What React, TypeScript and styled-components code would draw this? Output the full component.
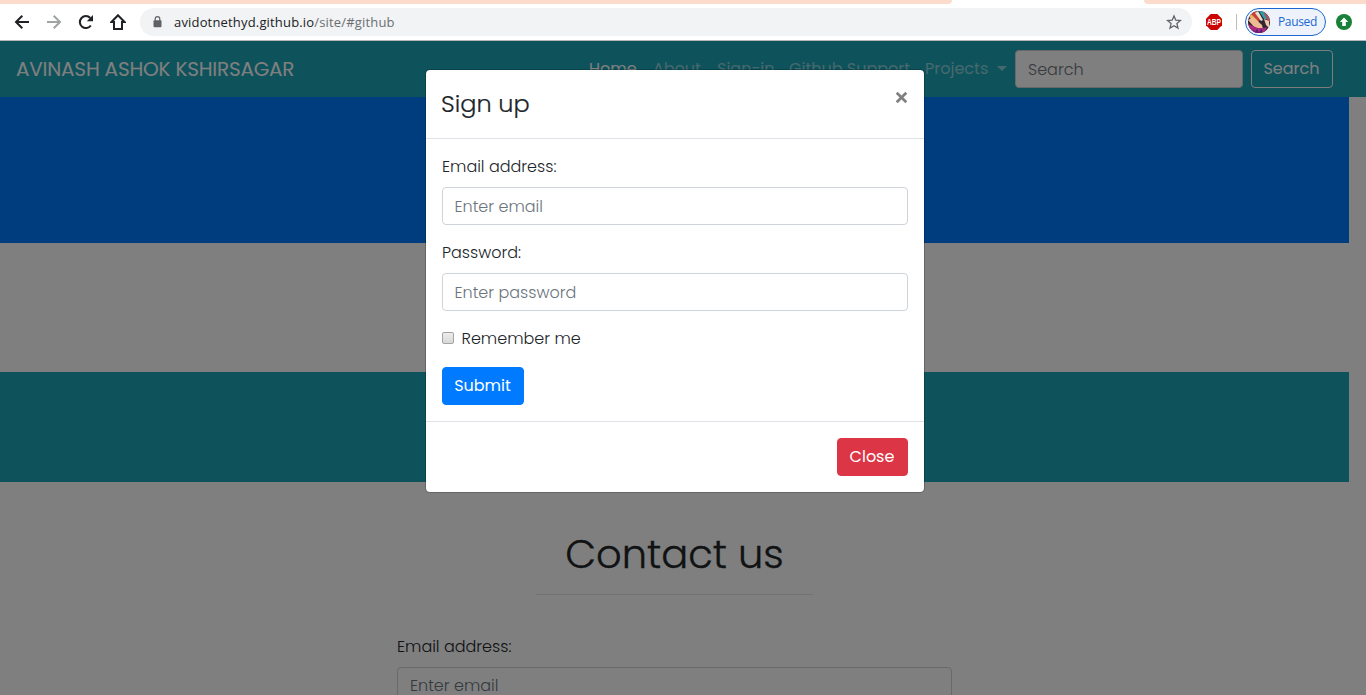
import React from "react";
import styled, { createGlobalStyle } from "styled-components";

const GlobalStyle = createGlobalStyle`
  *, *::before, *::after { box-sizing: border-box; }
  html, body { margin: 0; height: 695px; overflow: hidden; background: #fff; }
  body {
    font-family: Poppins, Inter, "Open Sans", sans-serif;
    font-size: 16px;
    font-weight: 300;
    line-height: 1.5;
    color: #212529;
  }
`;

const Window = styled.div`
  height: 695px;
  display: flex;
  flex-direction: column;
  overflow: hidden;
`;

const TabStrip = styled.div`
  flex: none;
  height: 4px;
  display: flex;
  justify-content: space-between;
  overflow: hidden;
`;

const TabEdge = styled.div<{ $width: number; $side: "left" | "right" }>`
  width: ${(p) => p.$width}px;
  height: 4px;
  background: #fddbca;
  border-radius: ${(p) => (p.$side === "left" ? "0 0 7px 0" : "0 0 0 7px")};
`;

const Toolbar = styled.div`
  flex: none;
  height: 37px;
  display: flex;
  align-items: center;
  padding: 0 14px;
  border-bottom: 1px solid #b5b5b5;
  background: #fff;
`;

const NavIcons = styled.div`
  display: flex;
  gap: 16px;
  margin-right: 14px;
  svg { display: block; }
`;

const AddressBar = styled.div`
  width: 1052px;
  height: 28px;
  display: flex;
  align-items: center;
  padding: 0 10px 0 12px;
  border-radius: 14px;
  background: #f1f3f4;
  svg { display: block; flex: none; }
`;

const Url = styled.div`
  flex: 1;
  margin-left: 11px;
  font: 400 13px/20px "Open Sans", sans-serif;
  letter-spacing: 0.17px;
  color: #6b6f73;
  span { color: #202124; }
`;

const ToolbarEnd = styled.div`
  display: flex;
  align-items: center;
  margin-left: 14px;
  svg { display: block; flex: none; overflow: visible; }
`;

const Separator = styled.div`
  width: 1px;
  height: 16px;
  margin: 0 8px 0 14px;
  background: #b9bcc0;
`;

const Profile = styled.div`
  width: 81px;
  height: 28px;
  display: flex;
  align-items: center;
  gap: 8px;
  padding-left: 2px;
  margin-right: 10px;
  border: 1px solid #1a66d2;
  border-radius: 14px;
  background: #edf2fb;
  font: 400 12px/18px "Open Sans", sans-serif;
  letter-spacing: -0.35px;
  color: #1967d2;
`;

const Viewport = styled.main`
  position: relative;
  flex: 1;
  overflow: hidden;
`;

const Navbar = styled.nav`
  height: 56px;
  display: flex;
  align-items: center;
  padding: 0 33px 0 16px;
  background: #1ca5b8;
`;

const Brand = styled.div`
  flex: 1;
  font-size: 20px;
  line-height: 30px;
  font-weight: 400;
  letter-spacing: -0.22px;
  color: #fff;
`;

const NavLink = styled.div<{ $width: number; $active?: boolean }>`
  width: ${(p) => p.$width}px;
  padding-left: 8px;
  font-weight: 400;
  white-space: nowrap;
  color: ${(p) => (p.$active ? "#fff" : "rgba(255,255,255,.5)")};
`;

const Caret = styled.span`
  display: inline-block;
  margin-left: 9px;
  vertical-align: 3px;
  border: 5px solid transparent;
  border-top-color: currentColor;
  border-bottom: 0;
`;

const SearchForm = styled.div`
  display: flex;
  gap: 8px;
`;

const Field = styled.div<{ $width?: number }>`
  width: ${(p) => (p.$width ? `${p.$width}px` : "100%")};
  height: 38px;
  padding: 7px 12px 5px 11.5px;
  border: 1px solid #ced4da;
  border-radius: 4px;
  background: #fff;
  color: #6c757d;
`;

const SearchField = styled(Field)`
  padding-left: 12px;
`;

const ContactField = styled(Field)`
  padding: 6px 12px;
`;

const Button = styled.button<{ $tone: "primary" | "danger" | "outline"; $width: number }>`
  display: block;
  width: ${(p) => p.$width}px;
  height: 38px;
  padding: 0 1px 0 0;
  border: 1px solid ${(p) => ({ primary: "#007bff", danger: "#dc3545", outline: "#f8f9fa" })[p.$tone]};
  border-radius: 4px;
  background: ${(p) => ({ primary: "#007bff", danger: "#dc3545", outline: "transparent" })[p.$tone]};
  color: #fff;
  font: inherit;
  font-weight: 400;
`;

const Band = styled.div<{ $height: number; $color: string }>`
  width: 1349px;
  height: ${(p) => p.$height}px;
  background: ${(p) => p.$color};
`;

const Contact = styled.section`
  width: 1349px;
  display: flex;
  flex-direction: column;
  align-items: center;
  padding-top: 43px;
`;

const ContactTitle = styled.h1`
  margin: 0;
  width: 277px;
  height: 70px;
  border-bottom: 1px solid rgba(0, 0, 0, 0.1);
  text-align: center;
  font-size: 40px;
  line-height: 58px;
  font-weight: 300;
  white-space: nowrap;
  -webkit-text-stroke: 0.35px currentColor;
`;

const ContactForm = styled.div`
  width: 555px;
  padding-top: 40px;
`;

const Label = styled.div`
  margin-bottom: 8px;
`;

const Backdrop = styled.div`
  position: absolute;
  inset: 0;
  display: flex;
  justify-content: center;
  align-items: flex-start;
  padding: 28px 16px 0 0;
  background: rgba(0, 0, 0, 0.5);
`;

const Dialog = styled.div`
  width: 500px;
  height: 424px;
  border: 1px solid rgba(0, 0, 0, 0.2);
  border-radius: 5px;
  background: #fff;
  background-clip: padding-box;
`;

const DialogHeader = styled.header`
  height: 69px;
  display: flex;
  justify-content: space-between;
  padding: 16px 16px 16px 15px;
  border-bottom: 1px solid #dee2e6;
  svg { margin: 5px 0 0; }
`;

const DialogTitle = styled.h4`
  margin: 0;
  font-size: 24px;
  line-height: 36px;
  font-weight: 300;
  -webkit-text-stroke: 0.2px currentColor;
`;

const DialogBody = styled.div`
  height: 282px;
  padding: 16px;
`;

const FormGroup = styled.div`
  margin-bottom: 16px;
`;

const CheckRow = styled.div`
  display: flex;
  align-items: flex-start;
  height: 24px;
  margin-bottom: 16px;
  gap: 7.5px;
`;

const Checkbox = styled.span`
  width: 12px;
  height: 12px;
  margin-top: 5px;
  border: 1px solid #a3a3a3;
  border-radius: 2px;
  background: linear-gradient(#ececec, #d8d8d8);
`;

const DialogFooter = styled.footer`
  display: flex;
  justify-content: flex-end;
  padding: 16px;
  border-top: 1px solid #dee2e6;
`;

const ArrowIcon = ({ color, flip }: { color: string; flip?: boolean }) => (
  <svg width="16" height="16" viewBox="0 0 16 16" fill="none" stroke={color} strokeWidth="2" transform={flip ? "scale(-1 1)" : undefined}>
    <path d="M15 8H2.4M8.3 1.7L2 8l6.3 6.3" />
  </svg>
);

const ReloadIcon = () => (
  <svg width="16" height="16" viewBox="0 0 16 16">
    <path d="M12.8 11.5A6 6 0 1 1 12.3 4" fill="none" stroke="#202124" strokeWidth="2.1" />
    <path d="M15 1v6.2H8.8z" fill="#202124" />
  </svg>
);

const HomeIcon = () => (
  <svg width="16" height="16" viewBox="0 0 16 16">
    <path d="M8 1.3L1.5 8H4v7h8V8h2.5z" fill="none" stroke="#202124" strokeWidth="2" />
  </svg>
);

const LockIcon = () => (
  <svg width="11" height="12" viewBox="0 0 11 12">
    <rect x="1.5" y="4.3" width="8" height="7" rx="1" fill="#5f6368" />
    <path d="M3.2 5V3a2.3 2.3 0 0 1 4.6 0v2" fill="none" stroke="#5f6368" strokeWidth="1.2" />
  </svg>
);

const StarIcon = () => (
  <svg width="16" height="16" viewBox="0 0 16 16">
    <path d="M8 1.9l1.8 4.3 4.6.4-3.5 3 1.1 4.5L8 11.7 4 14.1l1.1-4.5-3.5-3 4.6-.4z" fill="none" stroke="#5f6368" strokeWidth="1.3" />
  </svg>
);

const AdblockIcon = () => (
  <svg width="16" height="16" viewBox="0 0 16 16">
    <path d="M4.7 0h6.6L16 4.7v6.6L11.3 16H4.7L0 11.3V4.7z" fill="#cc0404" />
    <text x="8" y="11" textAnchor="middle" fontFamily="Liberation Sans" fontWeight="700" fontSize="8.2" textLength="14" lengthAdjust="spacingAndGlyphs" fill="#fff">ABP</text>
  </svg>
);

const AvatarIcon = () => (
  <svg width="22" height="22" viewBox="0 0 22 22">
    <defs>
      <clipPath id="avatar"><circle cx="11" cy="11" r="11" /></clipPath>
    </defs>
    <g clipPath="url(#avatar)">
      <path d="M0 0h22v22H0z" fill="#33242f" />
      <path d="M1 2l6-2 6 9-4 1z" fill="#c9403a" />
      <path d="M0 5l3-2 8 8-4 0z" fill="#e6b45c" />
      <path d="M0 9l5-3 9 8 1 4-8-1z" fill="#eebb92" />
      <path d="M7 2l3-2 5 9-2 1z" fill="#e9ddcd" />
      <path d="M11 0h5l4 8-4 0z" fill="#2a9fa6" />
      <path d="M15 0l7 6v5l-3-2z" fill="#a8555e" />
      <path d="M16 8l5 2 0 7-3-3z" fill="#edc9ad" />
      <path d="M0 13l10 4 6 0 3-1-3 6H2z" fill="#a92a80" />
      <path d="M5 17l2 4 2-3 2 4 2-4 2 2-2 2H6z" fill="#5b1f70" />
    </g>
  </svg>
);

const UpdateIcon = () => (
  <svg width="16" height="16" viewBox="0 0 16 16">
    <circle cx="8" cy="8" r="8" fill="#188038" />
    <path d="M8 3.5L12.2 8H9.8v4H6.2V8H3.8z" fill="#fff" />
  </svg>
);

const CloseIcon = () => (
  <svg width="13" height="13" viewBox="0 0 13 13">
    <path d="M1.7 1.7l9.6 9.6M11.3 1.7l-9.6 9.6" stroke="#808080" strokeWidth="2.7" />
  </svg>
);

const App = () => (
  <Window>
    <GlobalStyle />
    <TabStrip>
      <TabEdge $width={952} $side="left" />
      <TabEdge $width={222} $side="right" />
    </TabStrip>
    <Toolbar>
      <NavIcons>
        <ArrowIcon color="#202124" />
        <ArrowIcon color="#a0a2a4" flip />
        <ReloadIcon />
        <HomeIcon />
      </NavIcons>
      <AddressBar>
        <LockIcon />
        <Url><span>avidotnethyd.github.io</span>/site/#github</Url>
        <StarIcon />
      </AddressBar>
      <ToolbarEnd>
        <AdblockIcon />
        <Separator />
        <Profile><AvatarIcon />Paused</Profile>
        <UpdateIcon />
      </ToolbarEnd>
    </Toolbar>
    <Viewport>
      <Navbar>
        <Brand>AVINASH ASHOK KSHIRSAGAR</Brand>
        <NavLink $width={64} $active>Home</NavLink>
        <NavLink $width={64}>About</NavLink>
        <NavLink $width={72}>Sign-in</NavLink>
        <NavLink $width={136}>Github Support</NavLink>
        <NavLink $width={98}>Projects<Caret /></NavLink>
        <SearchForm>
          <SearchField $width={228}>Search</SearchField>
          <Button $tone="outline" $width={82}>Search</Button>
        </SearchForm>
      </Navbar>
      <Band $height={146} $color="#007bff" />
      <Band $height={129} $color="#fff" />
      <Band $height={110} $color="#1ca5b8" />
      <Contact>
        <ContactTitle>Contact us</ContactTitle>
        <ContactForm>
          <Label>Email address:</Label>
          <ContactField>Enter email</ContactField>
        </ContactForm>
      </Contact>
      <Backdrop>
        <Dialog>
          <DialogHeader>
            <DialogTitle>Sign up</DialogTitle>
            <CloseIcon />
          </DialogHeader>
          <DialogBody>
            <FormGroup>
              <Label>Email address:</Label>
              <Field>Enter email</Field>
            </FormGroup>
            <FormGroup>
              <Label>Password:</Label>
              <Field>Enter password</Field>
            </FormGroup>
            <CheckRow><Checkbox />Remember me</CheckRow>
            <Button $tone="primary" $width={82}>Submit</Button>
          </DialogBody>
          <DialogFooter>
            <Button $tone="danger" $width={71}>Close</Button>
          </DialogFooter>
        </Dialog>
      </Backdrop>
    </Viewport>
  </Window>
);

export default App;
